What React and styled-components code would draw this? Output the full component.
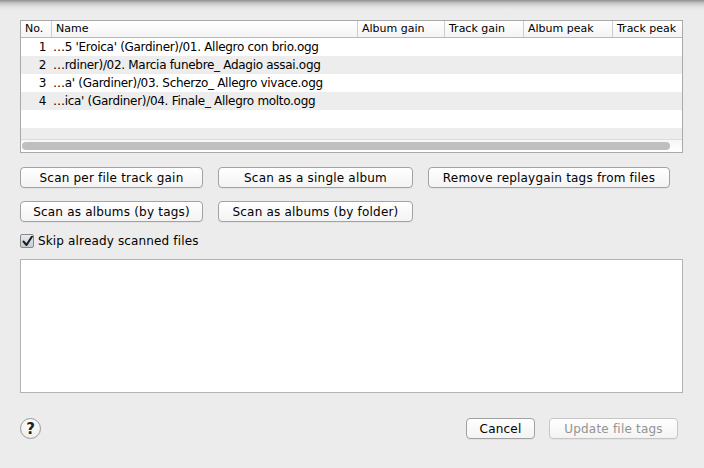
import styled, { createGlobalStyle } from 'styled-components';

const GlobalStyle = createGlobalStyle`
    html, body {
        margin: 0;
        padding: 0;
        background: #ececec;
    }
    body {
        font-family: "DejaVu Sans", "Liberation Sans", sans-serif;
        font-size: 12px;
        color: #000;
    }
`;

const Sheet = styled.div`
    width: 704px;
    height: 468px;
    box-sizing: border-box;
    padding: 20px 21px 0 20px;
    background: linear-gradient(#8f8f8f 0px, #c4c4c4 3px, #e2e2e2 7px, #ececec 10px);
    display: flex;
    flex-direction: column;
`;

const Table = styled.div`
    height: 133px;
    box-sizing: border-box;
    border: 1px solid #a9a9a9;
    background: #fff;
    display: flex;
    flex-direction: column;
`;

const HeaderRow = styled.div`
    display: flex;
    height: 16px;
    border-bottom: 1px solid #b9b9b9;
    background: linear-gradient(#fff, #f4f4f4);
    font-size: 11px;
    line-height: 16px;
`;

const HeaderCell = styled.div`
    width: ${p => p.w}px;
    flex: none;
    box-sizing: border-box;
    padding-left: 4px;
    border-left: ${p => (p.first ? 'none' : '1px solid #cdcdcd')};
    white-space: nowrap;
    overflow: hidden;
`;

const Row = styled.div`
    display: flex;
    height: 18px;
    line-height: 18px;
    letter-spacing: -0.3px;
    background: ${p => (p.odd ? '#ededed' : '#fff')};
`;

const NumCell = styled.div`
    width: 25px;
    text-align: right;
    flex: none;
`;

const NameCell = styled.div`
    padding-left: 7px;
    white-space: nowrap;
`;

const Filler = styled.div`
    height: 11px;
    background: #ededed;
`;

const ScrollTrack = styled.div`
    flex: 1;
    border-top: 1px solid #dcdcdc;
    background: linear-gradient(#f6f6f6, #fff);
    display: flex;
    align-items: center;
    padding: 0 12px 0 1px;
`;

const ScrollThumb = styled.div`
    flex: 1;
    height: 8px;
    border-radius: 4px;
    background: #bfbfbf;
`;

const ButtonRow = styled.div`
    display: flex;
    gap: 15px;
    margin-top: ${p => p.top}px;
`;

const Button = styled.button`
    width: ${p => p.w}px;
    height: 21px;
    padding: 0;
    box-sizing: border-box;
    border: 1px solid ${p => (p.disabled ? '#c6c6c6' : '#a2a2a2')};
    border-radius: 4px;
    background: linear-gradient(#ffffff, #f3f3f3);
    box-shadow: 0 1px 0 rgba(0, 0, 0, 0.04);
    font-family: inherit;
    font-size: 12px;
    letter-spacing: 0.2px;
    color: ${p => (p.disabled ? '#939393' : '#000')};
    flex: none;
`;

const CheckLine = styled.label`
    display: flex;
    align-items: center;
    gap: 4px;
    margin-top: 11px;
    height: 16px;
    letter-spacing: 0.15px;
`;

const CheckBox = styled.span`
    width: 14px;
    height: 14px;
    box-sizing: border-box;
    border: 1px solid #888;
    border-radius: 2px;
    background: linear-gradient(#e6eaf1, #c5ccd8);
    display: flex;
    align-items: center;
    justify-content: center;
`;

const LogArea = styled.div`
    margin-top: 10px;
    height: 134px;
    box-sizing: border-box;
    border: 1px solid #b3b3b3;
    background: #fff;
`;

const Footer = styled.div`
    display: flex;
    align-items: center;
    margin-top: 25px;
    padding-right: 5px;
    gap: 14px;
`;

const HelpButton = styled.div`
    width: 21px;
    height: 21px;
    box-sizing: border-box;
    border-radius: 50%;
    border: 1px solid #9a9a9a;
    background: radial-gradient(circle at 50% 30%, #ffffff, #f0f0f0 70%, #e2e2e2);
    display: flex;
    align-items: center;
    justify-content: center;
    font-weight: bold;
    font-size: 15px;
    color: #222;
    margin-right: auto;
`;

const columns = [
    { label: 'No.', w: 30, first: true },
    { label: 'Name', w: 306 },
    { label: 'Album gain', w: 87 },
    { label: 'Track gain', w: 79 },
    { label: 'Album peak', w: 89 },
    { label: 'Track peak', w: 71 },
];

const files = [
    '…5 \'Eroica\' (Gardiner)/01. Allegro con brio.ogg',
    '…rdiner)/02. Marcia funebre_ Adagio assai.ogg',
    '…a\' (Gardiner)/03. Scherzo_ Allegro vivace.ogg',
    '…ica\' (Gardiner)/04. Finale_ Allegro molto.ogg',
];

export default function App() {
    return (
        <>
            <GlobalStyle />
            <Sheet>
                <Table>
                    <HeaderRow>
                        {columns.map(c => (
                            <HeaderCell key={c.label} w={c.w} first={c.first}>{c.label}</HeaderCell>
                        ))}
                    </HeaderRow>
                    {files.map((f, i) => (
                        <Row key={f} odd={i % 2 === 1}>
                            <NumCell>{i + 1}</NumCell>
                            <NameCell>{f}</NameCell>
                        </Row>
                    ))}
                    <Row />
                    <Filler />
                    <ScrollTrack>
                        <ScrollThumb />
                    </ScrollTrack>
                </Table>

                <ButtonRow top={14}>
                    <Button w={183}>Scan per file track gain</Button>
                    <Button w={195}>Scan as a single album</Button>
                    <Button w={242}>Remove replaygain tags from files</Button>
                </ButtonRow>
                <ButtonRow top={13}>
                    <Button w={183}>Scan as albums (by tags)</Button>
                    <Button w={195}>Scan as albums (by folder)</Button>
                </ButtonRow>

                <CheckLine>
                    <CheckBox>
                        <svg width="11" height="11" viewBox="0 0 11 11">
                            <path d="M1.5 5.5 L4.5 9 L10 0.5" fill="none" stroke="#1b1b1b" strokeWidth="2" strokeLinecap="round" strokeLinejoin="round" />
                        </svg>
                    </CheckBox>
                    Skip already scanned files
                </CheckLine>

                <LogArea />

                <Footer>
                    <HelpButton>?</HelpButton>
                    <Button w={69}>Cancel</Button>
                    <Button w={129} disabled>Update file tags</Button>
                </Footer>
            </Sheet>
        </>
    );
}
